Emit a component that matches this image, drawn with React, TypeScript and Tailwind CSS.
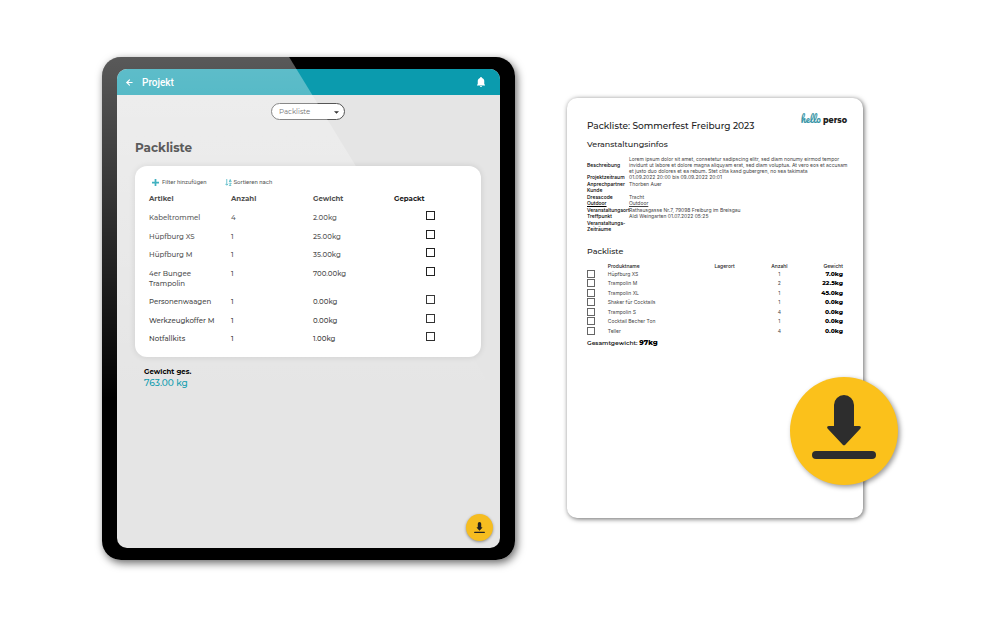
import { ArrowLeft } from "lucide-react";

const articles = [
  { name: "Kabeltrommel", count: 4, weight: "2.00kg" },
  { name: "Hüpfburg XS", count: 1, weight: "25.00kg" },
  { name: "Hüpfburg M", count: 1, weight: "35.00kg" },
  { name: "4er Bungee Trampolin", count: 1, weight: "700.00kg" },
  { name: "Personenwaagen", count: 1, weight: "0.00kg" },
  { name: "Werkzeugkoffer M", count: 1, weight: "0.00kg" },
  { name: "Notfallkits", count: 1, weight: "1.00kg" },
];

const infos = [
  {
    label: "Beschreibung",
    value:
      "Lorem ipsum dolor sit amet, consetetur sadipscing elitr, sed diam nonumy eirmod tempor invidunt ut labore et dolore magna aliquyam erat, sed diam voluptua. At vero eos et accusam et justo duo dolores et ea rebum. Stet clita kasd gubergren, no sea takimata",
  },
  { label: "Projektzeitraum", value: "01.09.2022 20:00 bis 09.09.2022 20:01" },
  { label: "Anprechpartner", value: "Thorben Auer" },
  { label: "Kunde", value: "" },
  { label: "Dresscode", value: "Tracht" },
  { label: "Outdoor", value: "Outdoor", underline: true },
  {
    label: "Veranstaltungsort",
    value: "Rathausgasse Nr.7, 79098 Freiburg im Breisgau",
  },
  { label: "Treffpunkt", value: "Aldi Weingarten 01.07.2022 05:25" },
  { label: "Veranstaltungs-Zeiträume", value: "" },
];

const products = [
  { name: "Hüpfburg XS", count: 1, weight: "7.0kg" },
  { name: "Trampolin M", count: 2, weight: "22.5kg" },
  { name: "Trampolin XL", count: 1, weight: "45.0kg" },
  { name: "Shaker für Cocktails", count: 1, weight: "0.0kg" },
  { name: "Trampolin S", count: 4, weight: "0.0kg" },
  { name: "Cocktail Becher Ton", count: 1, weight: "0.0kg" },
  { name: "Teller", count: 4, weight: "0.0kg" },
];

function DownloadIcon({ className }: { className: string }) {
  return (
    <svg viewBox="0 0 64 64" className={className} fill="currentColor" aria-hidden="true">
      <path d="M22 10a10 10 0 0 1 20 0v21h5c2 0 2.500 1.500 1 3L33.500 49.500a2 2 0 0 1-3 0L16 34c-1.500-1.500-1-3 1-3h5z" />
      <rect x="0" y="56" width="64" height="8" rx="4" />
    </svg>
  );
}

function TabletScreen() {
  return (
    <div className="relative flex h-full flex-col overflow-hidden rounded-[10px] bg-[#e5e5e5]">
      <header className="flex h-[26px] items-center bg-[#0b9bae] px-2 text-white">
        <button aria-label="Zurück">
          <ArrowLeft className="h-[9px] w-[9px]" strokeWidth={3} />
        </button>
        <h1 className="ml-2 font-[Roboto,sans-serif] text-[10px] font-medium">
          Projekt
        </h1>
        <button aria-label="Benachrichtigungen" className="mr-[7px] ml-auto">
          <svg viewBox="0 0 16 20" className="h-[10px] w-2" fill="currentColor">
            <path d="M8 0a2 2 0 0 1 2 2c3 1 4.500 3 4.500 6v6l1.500 2v1H0v-1l1.500-2V8c0-3 1.500-5 4.500-6a2 2 0 0 1 2-2zM6 18h4a2 2 0 0 1-4 0z" />
          </svg>
        </button>
      </header>

      <div className="pt-2 pr-[19px] pl-[18px]">
        <div className="relative mx-auto w-[74px]">
          <select
            aria-label="Liste"
            className="block h-[17px] w-full appearance-none rounded-full border border-[#555] bg-white pt-[2px] pl-[7px] text-[7px] text-[#333]"
          >
            <option>Packliste</option>
          </select>
          <svg
            viewBox="0 0 6 3"
            className="pointer-events-none absolute top-[8px] right-[6px] h-[3px] w-[5px]"
            fill="#333"
          >
            <path d="M0 0h6L3 3z" />
          </svg>
        </div>

        <h2 className="mt-[19px] text-xs leading-[18px] font-bold text-[#222]">
          Packliste
        </h2>

        <section className="mt-[9px] rounded-xl bg-white px-[14px] pt-[11px] pb-2 shadow-[0_0_6px_rgba(0,0,0,0.12)]">
          <div className="flex gap-[18px] pl-[3px] font-[Roboto,sans-serif] text-[6px] leading-[10px] text-[#222]">
            <button className="flex items-center gap-[3px]">
              <svg viewBox="0 0 8 8" className="h-[7px] w-[7px]" fill="#0b9bae">
                <path d="M3 0h2v3h3v2H5v3H3V5H0V3h3z" />
              </svg>
              Filter hinzufügen
            </button>
            <button className="flex items-center gap-[2px]">
              <svg
                viewBox="0 0 14 14"
                className="h-[7px] w-[7px]"
                fill="none"
                stroke="#0b9bae"
                strokeWidth="1.5"
              >
                <path d="M3.500 0v12M.5 9.500l3 3 3-3M8.500 6l2-5 2 5M9 4.500h3M8.500 8.500h4l-4 4.500h4" />
              </svg>
              Sortieren nach
            </button>
          </div>

          <table className="mt-[7px] w-full table-fixed text-left text-[7px] leading-[10px] text-[#333]">
            <thead>
              <tr className="text-[#222] *:pb-[5px] *:font-bold">
                <th className="w-[82px]">Artikel</th>
                <th className="w-[82px]">Anzahl</th>
                <th className="w-[81px]">Gewicht</th>
                <th>Gepackt</th>
              </tr>
            </thead>
            <tbody>
              {articles.map((article) => (
                <tr
                  key={article.name}
                  className="align-top font-medium odd:*:pb-[5px] even:*:pb-1"
                >
                  <td className="pt-1 pr-3">{article.name}</td>
                  <td className="pt-1">{article.count}</td>
                  <td className="pt-1">{article.weight}</td>
                  <td className="pt-[2px]">
                    <input
                      type="checkbox"
                      aria-label={`${article.name} gepackt`}
                      className="ml-8 block h-[9px] w-[9px] appearance-none border border-[#222] bg-white checked:bg-[#222]"
                    />
                  </td>
                </tr>
              ))}
            </tbody>
          </table>
        </section>

        <div className="mt-[10px] pl-[9px]">
          <div className="text-[7px] leading-[10px] font-bold text-black">
            Gewicht ges.
          </div>
          <div className="text-[9px] leading-3 font-medium text-[#0b9bae]">
            763.00 kg
          </div>
        </div>
      </div>

      <button
        aria-label="Packliste herunterladen"
        className="absolute right-[7px] bottom-[7px] grid h-[27px] w-[27px] place-items-center rounded-full bg-[#f6bd20] text-[#222] shadow-[0_1px_3px_rgba(0,0,0,0.4)]"
      >
        <DownloadIcon className="h-[11px] w-[11px]" />
      </button>
    </div>
  );
}

function Tablet() {
  return (
    <div className="relative aspect-[413/503] overflow-hidden rounded-[19px] bg-black px-[15px] py-3">
      <TabletScreen />
      {/* light reflection across the glass */}
      <div className="pointer-events-none absolute inset-0 bg-linear-to-b from-white/35 to-white/0 to-68% [clip-path:polygon(0_0,45.3%_0,96%_68%,0_68%)]" />
    </div>
  );
}

function Sheet() {
  return (
    <article className="relative aspect-[296/420] rounded-[10px] bg-white pt-4 pr-4 pl-5 text-[#222] shadow-[1px_1px_5px_rgba(0,0,0,0.6)]">
      <div className="flex items-start justify-between">
        <h2 className="mt-[6px] text-[9px] leading-3 font-medium">
          Packliste: Sommerfest Freiburg 2023
        </h2>
        <div className="text-[8px] leading-[10px] font-extrabold">
          <span className="font-[Pacifico,Lato,sans-serif] text-[10px] font-normal text-[#3a97a8]">
            hello
          </span>{" "}
          perso
        </div>
      </div>

      <h3 className="mt-[7px] text-[8px] leading-[10px] font-medium">
        Veranstaltungsinfos
      </h3>
      <div className="mt-[7px] -mr-1">
        <table className="w-full table-fixed text-left font-[Inter,sans-serif] text-[5px]">
          <tbody>
            {infos.map((info) => (
              <tr
                key={info.label}
                className="odd:leading-[6px] even:leading-[7px]"
              >
                <th
                  scope="row"
                  className={`w-[42px] align-middle font-medium text-black ${info.underline ? "underline" : ""}`}
                >
                  {info.label}
                </th>
                <td
                  className={`text-[#444] ${info.underline ? "underline" : ""}`}
                >
                  {info.value}
                </td>
              </tr>
            ))}
          </tbody>
        </table>
      </div>

      <h3 className="mt-[14px] text-[8px] leading-[10px] font-medium">
        Packliste
      </h3>
      <table className="mt-[7px] w-full table-fixed text-left font-[Inter,sans-serif] text-[5px] leading-[6px]">
        <thead>
          <tr className="*:font-medium">
            <td className="w-[8%]" />
            <th className="w-[41%]">Produktname</th>
            <th className="w-[18%]">Lagerort</th>
            <th className="w-[14%] text-center">Anzahl</th>
            <th className="pr-1 text-right">Gewicht</th>
          </tr>
        </thead>
        <tbody>
          {products.map((product) => (
            <tr key={product.name} className="odd:h-[9px] even:h-[10px]">
              <td>
                <input
                  type="checkbox"
                  aria-label={product.name}
                  className="block h-2 w-2 appearance-none border border-[#666] bg-white checked:bg-[#666]"
                />
              </td>
              <td className="text-[#444]">{product.name}</td>
              <td />
              <td className="text-center text-[#444]">{product.count}</td>
              <td className="pr-1 text-right font-[Montserrat,Inter,sans-serif] text-[6px] font-extrabold text-black">
                {product.weight}
              </td>
            </tr>
          ))}
        </tbody>
      </table>
      <p className="mt-[3px] text-[6px] leading-[10px] font-semibold">
        Gesamtgewicht:{" "}
        <b className="text-[7px] font-extrabold text-black">97kg</b>
      </p>

      <button
        aria-label="Herunterladen"
        className="absolute -right-[35px] bottom-[33px] grid h-[108px] w-[108px] place-items-center rounded-full bg-[#fbc11b] text-[#2d2d2d] shadow-[2px_2px_5px_rgba(0,0,0,0.4)]"
      >
        <DownloadIcon className="mb-2 h-16 w-16" />
      </button>
    </article>
  );
}

export default function App() {
  return (
    <main className="grid min-h-screen grid-cols-[413fr_296fr] items-start gap-[52px] bg-white pt-[57px] pr-[137px] pb-[57px] pl-[102px] font-[Montserrat,Inter,sans-serif]">
      <div className="rounded-[19px] shadow-[2px_3px_8px_rgba(0,0,0,0.6)]">
        <Tablet />
      </div>
      <div className="pt-[41px]">
        <Sheet />
      </div>
    </main>
  );
}
